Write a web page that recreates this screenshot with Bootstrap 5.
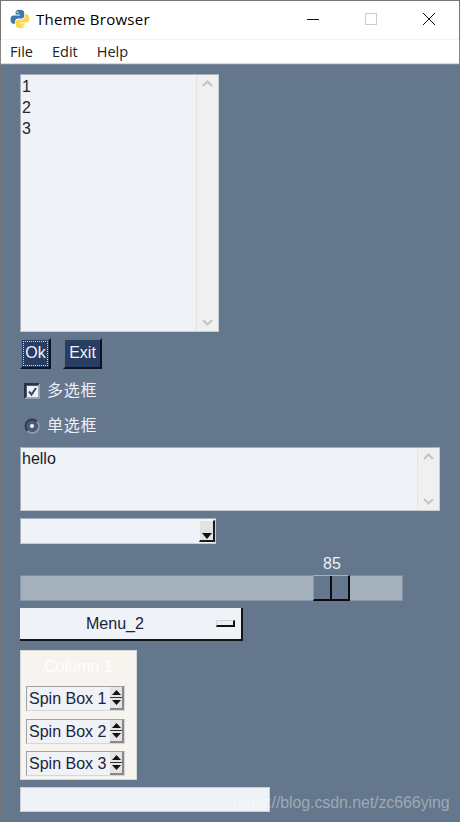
<!DOCTYPE html>
<html lang="zh">
<head>
<meta charset="utf-8">
<title>Theme Browser</title>
<link href="https://cdn.jsdelivr.net/npm/bootstrap@5.3.0/dist/css/bootstrap.min.css" rel="stylesheet">
<style>
html,body{height:822px;overflow:hidden;margin:0}
body{background:#64778d;font-family:"Liberation Sans",Arial,sans-serif;font-size:16px;color:#1a1a2a;position:relative}
.shell{height:822px;border:1px solid #757575;border-bottom:0;border-right-color:#64778d;display:flex;flex-direction:column}
.tbar{height:38px;background:#fff;padding:0 0 2px 9px;color:#000;font-family:"Open Sans",sans-serif;font-size:15px;flex:none}
.tbar .ttl{margin-left:6px;letter-spacing:.28px}
.wbtns{margin-left:auto;margin-right:1px}
.wbtn{width:58px;height:36px}
.mbar{height:24px;background:#fff;border-top:1px solid #f2f2f2;color:#222;font-family:"Open Sans",sans-serif;font-size:14.5px;padding-left:9px;gap:19px;box-shadow:0 1px 1px #d8dbe0;flex:none}
.pane{padding:11px 0 0 19px;flex:1 1 auto}
.well-box{background:#eff2f7;border:1px solid #c9ced6;border-top-color:#a9afb8;border-left-color:#a9afb8}
.lst{width:199px;height:258px}
.lst-txt{padding:1px 0 0 1px;line-height:21px;color:#222233}
.sb{width:22px;background:#f0f0f0;border-left:1px solid #e4e4e4;flex:none;padding:5px 0}
.bts{gap:12px;margin-top:6px}
.tkb{height:31px;background:#283d62;color:#f0f3f9;border:2px solid;border-color:#62738a #0c1322 #0c1322 #62738a;line-height:26px;text-align:center;font-size:16px}
.tkb-ok{width:31px;outline:1px dotted #d8d8d8;outline-offset:-4px}
.tkb-ex{width:39px}
.optrow{color:#eef1f6;font-family:"Liberation Sans","Noto Sans CJK SC",sans-serif;font-size:16px;height:24px;padding-left:4px;gap:7px;letter-spacing:.8px}
.opt1{margin-top:10px}
.opt2{margin-top:11px}
.chk{width:16px;height:16px;background:#4f5a80;border:2px solid;border-color:#2a3345 #9aa6b4 #9aa6b4 #2a3345;display:flex;align-items:center;justify-content:center}
.chk>span{display:flex;width:11px;height:11px;background:#eff2f7}
.rad{width:16px;height:16px}
.multi{width:420px;height:64px;margin-top:9px}
.multi-txt{padding:1px 0 0 1px;line-height:20px}
.cmb{width:196px;height:26px;margin-top:7px}
.cmb-arr{width:16px;height:22px;margin:1px 0 0 auto;background:#e2e2e2;border-right:2px solid #1a1a1a;border-bottom:2px solid #1a1a1a;border-top:1px solid #f5f5f5;border-left:1px solid #f5f5f5;padding-bottom:1px}
.sld-val{width:383px;color:#eef1f6;margin-top:10px;height:20px;line-height:20px;padding-left:303px;font-size:16px}
.sld{width:383px;height:26px;background:#a4b0bc;border:1px solid #8996a6;border-top-color:#7c8b9d;margin-top:1px;padding-left:292px}
.thumb{width:37px;height:26px;background:#64778d;border-right:2px solid #0b0b0b;border-bottom:2px solid #0b0b0b;border-top:1px solid #a4b0bc;border-left:1px solid #8996a6;margin-top:-1px}
.thumb>span{display:block;width:2px;height:100%;margin-left:16px;background:#0d0d0d}
.mnu{width:223px;height:33px;background:#eff2f7;border-right:2px solid #10151d;border-bottom:2px solid #10151d;margin-top:7px;color:#20243a;padding-left:66px;font-size:16px}
.mnu-ind{width:19px;height:7px;margin-left:auto;margin-right:6px;background:#eceef2;border:1px solid #cfd3da;border-right:2px solid #111;border-bottom:2px solid #111}
.colbox{width:117px;height:130px;background:#f7f3ee;border:1px solid #d8d8d4;margin-top:9px;padding:0 5px}
.col-ttl{color:#fff;text-align:center;height:35px;line-height:32px;font-size:16px}
.spn{width:99px;height:25px;background:#eff2f7;border:1px solid #9ea3a8;border-bottom-color:#d4d6da;border-right-color:#d4d6da;margin-bottom:7.5px;padding-left:2px;color:#20243a;white-space:nowrap;line-height:23px}
.spn-arr{width:14px;flex:none;margin-left:auto;height:23px;background:#e4e4e4;border-right:2px solid #888;border-bottom:2px solid #888}
.spn-arr>i{display:block;width:100%;height:1px;background:#333;margin:2px 0}
.inp{width:250px;height:25px;background:#eff2f7;border:1px solid #c9d0da;margin-top:7px}
.wm{position:absolute;left:233px;top:792px;color:rgba(255,255,255,.38);font-size:16px;line-height:22px;white-space:nowrap;letter-spacing:-.1px}
</style>
</head>
<body>
<div class="shell">
  <div class="tbar d-flex align-items-center">
    <svg width="20" height="20" viewBox="0 0 20 20" aria-hidden="true">
      <path fill="#3c78ac" d="M9.6.8C7 .8 5.6 1.8 5.6 3.5v2h4.4v1H3.400C1.500 6.500.6 8.200.6 10.400c0 2.500 1 4.400 2.800 4.400h1.700v-2.400c0-1.700 1.400-3 3.100-3h3.600c1.300 0 2.400-1.100 2.400-2.500V3.300C14.200 1.800 12.400.8 9.600.8zM7.500 2.400a.8.8 0 1 1 0 1.700.8.800 0 0 1 0-1.700z"/>
      <path fill="#fdd64b" d="M10.400 19.200c2.600 0 4-1 4-2.700v-2H10v-1h6.600c1.900 0 2.800-1.700 2.800-3.900 0-2.500-1-4.400-2.800-4.400h-1.700v2.400c0 1.700-1.400 3-3.100 3H8.200c-1.300 0-2.400 1.100-2.400 2.500v3.600c0 1.500 1.800 2.500 4.600 2.500zm2.100-1.600a.8.8 0 1 1 0-1.700.8.800 0 0 1 0 1.700z"/>
    </svg>
    <span class="ttl">Theme Browser</span>
    <div class="wbtns d-flex">
      <div class="wbtn d-flex align-items-center justify-content-center"><svg width="12" height="12" viewBox="0 0 12 12" aria-hidden="true"><path d="M0 6.500h12" stroke="#111" fill="none"/></svg></div>
      <div class="wbtn d-flex align-items-center justify-content-center"><svg width="12" height="12" viewBox="0 0 12 12" aria-hidden="true"><rect x=".5" y=".5" width="11" height="11" fill="none" stroke="#ccc"/></svg></div>
      <div class="wbtn d-flex align-items-center justify-content-center"><svg width="12" height="12" viewBox="0 0 12 12" aria-hidden="true"><path d="M0 0l12 12M12 0L0 12" stroke="#111" fill="none"/></svg></div>
    </div>
  </div>
  <div class="mbar d-flex align-items-center"><span>File</span><span>Edit</span><span>Help</span></div>
  <div class="pane">
    <div class="well-box lst d-flex">
      <div class="lst-txt flex-grow-1">1<br>2<br>3</div>
      <div class="sb d-flex flex-column justify-content-between align-items-center">
        <svg width="11" height="7" viewBox="0 0 11 7" aria-hidden="true"><path d="M1 6l4.500-4.500L10 6" fill="none" stroke="#c4c4c4" stroke-width="2"/></svg>
        <svg width="11" height="7" viewBox="0 0 11 7" aria-hidden="true"><path d="M1 1l4.500 4.500L10 1" fill="none" stroke="#c4c4c4" stroke-width="2"/></svg>
      </div>
    </div>
    <div class="bts d-flex">
      <div class="tkb tkb-ok">Ok</div>
      <div class="tkb tkb-ex">Exit</div>
    </div>
    <div class="optrow opt1 d-flex align-items-center">
      <div class="chk"><span><svg width="11" height="11" viewBox="0 0 11 11" aria-hidden="true"><path d="M2 5.500l2.500 3L9 2" fill="none" stroke="#3d4668" stroke-width="2"/></svg></span></div>
      <span>多选框</span>
    </div>
    <div class="optrow opt2 d-flex align-items-center">
      <svg class="rad" viewBox="0 0 16 16" aria-hidden="true"><circle cx="8" cy="8" r="6.500" fill="#4f5a80" stroke="#2f3a50" stroke-width="2"/><path d="M13 3.500A6.500 6.500 0 0 1 3.500 13" fill="none" stroke="#8f9cac" stroke-width="2"/><circle cx="8" cy="8" r="2" fill="#f0f3f9"/></svg>
      <span>单选框</span>
    </div>
    <div class="well-box multi d-flex">
      <div class="multi-txt flex-grow-1">hello</div>
      <div class="sb d-flex flex-column justify-content-between align-items-center">
        <svg width="11" height="7" viewBox="0 0 11 7" aria-hidden="true"><path d="M1 6l4.500-4.500L10 6" fill="none" stroke="#c4c4c4" stroke-width="2"/></svg>
        <svg width="11" height="7" viewBox="0 0 11 7" aria-hidden="true"><path d="M1 1l4.500 4.500L10 1" fill="none" stroke="#c4c4c4" stroke-width="2"/></svg>
      </div>
    </div>
    <div class="well-box cmb d-flex">
      <div class="cmb-arr d-flex flex-column align-items-center justify-content-end">
        <svg width="10" height="6" viewBox="0 0 10 6" aria-hidden="true"><path d="M0 0h10L5 6z" fill="#111"/></svg>
      </div>
    </div>
    <div class="sld-val">85</div>
    <div class="sld"><div class="thumb"><span></span></div></div>
    <div class="mnu d-flex align-items-center">
      <span>Menu_2</span>
      <span class="mnu-ind"></span>
    </div>
    <div class="colbox">
      <div class="col-ttl">Column 1</div>
      <div class="spn d-flex">Spin Box 1<div class="spn-arr d-flex flex-column align-items-center justify-content-center"><svg width="9" height="5" viewBox="0 0 9 5" aria-hidden="true"><path d="M0 5h9L4.500 0z" fill="#111"/></svg><i></i><svg width="9" height="5" viewBox="0 0 9 5" aria-hidden="true"><path d="M0 0h9L4.500 5z" fill="#111"/></svg></div></div>
      <div class="spn d-flex">Spin Box 2<div class="spn-arr d-flex flex-column align-items-center justify-content-center"><svg width="9" height="5" viewBox="0 0 9 5" aria-hidden="true"><path d="M0 5h9L4.500 0z" fill="#111"/></svg><i></i><svg width="9" height="5" viewBox="0 0 9 5" aria-hidden="true"><path d="M0 0h9L4.500 5z" fill="#111"/></svg></div></div>
      <div class="spn d-flex">Spin Box 3<div class="spn-arr d-flex flex-column align-items-center justify-content-center"><svg width="9" height="5" viewBox="0 0 9 5" aria-hidden="true"><path d="M0 5h9L4.500 0z" fill="#111"/></svg><i></i><svg width="9" height="5" viewBox="0 0 9 5" aria-hidden="true"><path d="M0 0h9L4.500 5z" fill="#111"/></svg></div></div>
    </div>
    <div class="inp"></div>
  </div>
</div>
<div class="wm">https://blog.csdn.net/zc666ying</div>
</body>
</html>
